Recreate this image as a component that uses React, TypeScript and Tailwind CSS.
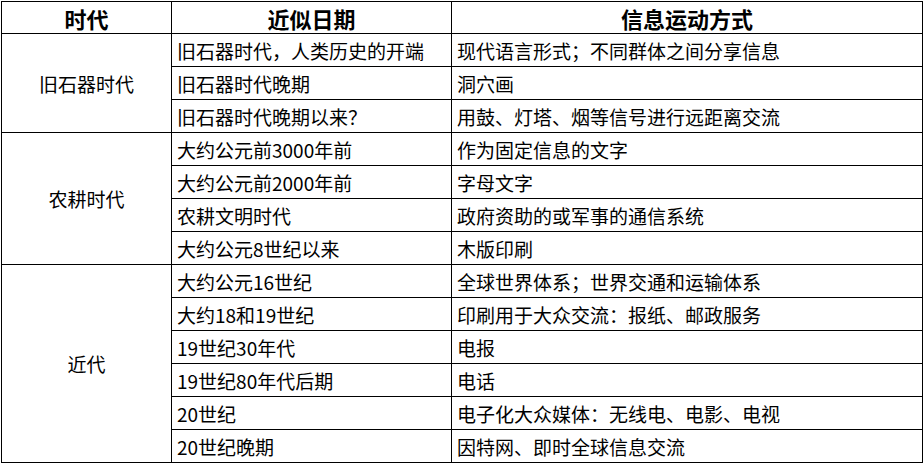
const groups: { era: string; rows: [string, string][] }[] = [
  {
    era: "旧石器时代",
    rows: [
      ["旧石器时代，人类历史的开端", "现代语言形式；不同群体之间分享信息"],
      ["旧石器时代晚期", "洞穴画"],
      ["旧石器时代晚期以来？", "用鼓、灯塔、烟等信号进行远距离交流"],
    ],
  },
  {
    era: "农耕时代",
    rows: [
      ["大约公元前3000年前", "作为固定信息的文字"],
      ["大约公元前2000年前", "字母文字"],
      ["农耕文明时代", "政府资助的或军事的通信系统"],
      ["大约公元8世纪以来", "木版印刷"],
    ],
  },
  {
    era: "近代",
    rows: [
      ["大约公元16世纪", "全球世界体系；世界交通和运输体系"],
      ["大约18和19世纪", "印刷用于大众交流：报纸、邮政服务"],
      ["19世纪30年代", "电报"],
      ["19世纪80年代后期", "电话"],
      ["20世纪", "电子化大众媒体：无线电、电影、电视"],
      ["20世纪晚期", "因特网、即时全球信息交流"],
    ],
  },
];

const cell = "border border-black px-[5px] py-0 text-left align-middle whitespace-nowrap";
const head = "border border-black font-bold text-center text-[22px] leading-none";

export default function App() {
  return (
    <div
      className="w-[923px] h-[464px] bg-white text-black text-[19px] leading-none pt-px pl-px"
      style={{ fontFamily: '"Noto Sans CJK SC", "Liberation Serif", sans-serif' }}
    >
      <table className="border-collapse table-fixed w-[921px]">
        <colgroup>
          <col className="w-[170px]" />
          <col className="w-[280px]" />
          <col className="w-[471px]" />
        </colgroup>
        <thead>
          <tr className="h-[32px]">
            <th className={head}>时代</th>
            <th className={head}>近似日期</th>
            <th className={head}>信息运动方式</th>
          </tr>
        </thead>
        <tbody>
          {groups.map((g) =>
            g.rows.map(([date, way], i) => (
              <tr key={g.era + i} className="h-[33px]">
                {i === 0 && (
                  <td rowSpan={g.rows.length} className="border border-black text-center align-middle font-normal">
                    {g.era}
                  </td>
                )}
                <td className={cell}>{date}</td>
                <td className={cell}>{way}</td>
              </tr>
            ))
          )}
        </tbody>
      </table>
    </div>
  );
}
